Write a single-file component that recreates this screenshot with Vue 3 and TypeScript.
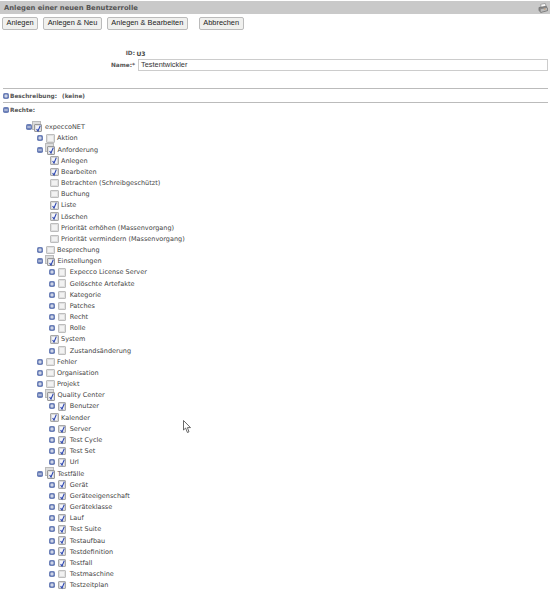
<script setup lang="ts">
interface Row { label: string; level: number; exp: '' | 'plus' | 'minus'; state: 'on' | 'off' | 'tri' }
const spec: [string, number, '' | 'plus' | 'minus', 'on' | 'off' | 'tri'][] = [
  ['expeccoNET', 0, 'minus', 'tri'],
  ['Aktion', 1, 'plus', 'off'],
  ['Anforderung', 1, 'minus', 'tri'],
  ['Anlegen', 2, '', 'on'],
  ['Bearbeiten', 2, '', 'on'],
  ['Betrachten (Schreibgeschützt)', 2, '', 'off'],
  ['Buchung', 2, '', 'off'],
  ['Liste', 2, '', 'on'],
  ['Löschen', 2, '', 'on'],
  ['Priorität erhöhen (Massenvorgang)', 2, '', 'off'],
  ['Priorität vermindern (Massenvorgang)', 2, '', 'off'],
  ['Besprechung', 1, 'plus', 'off'],
  ['Einstellungen', 1, 'minus', 'tri'],
  ['Expecco License Server', 2, 'plus', 'off'],
  ['Gelöschte Artefakte', 2, 'plus', 'off'],
  ['Kategorie', 2, 'plus', 'off'],
  ['Patches', 2, 'plus', 'off'],
  ['Recht', 2, 'plus', 'off'],
  ['Rolle', 2, 'plus', 'off'],
  ['System', 2, '', 'on'],
  ['Zustandsänderung', 2, 'plus', 'off'],
  ['Fehler', 1, 'plus', 'off'],
  ['Organisation', 1, 'plus', 'off'],
  ['Projekt', 1, 'plus', 'off'],
  ['Quality Center', 1, 'minus', 'tri'],
  ['Benutzer', 2, 'plus', 'on'],
  ['Kalender', 2, '', 'on'],
  ['Server', 2, 'plus', 'on'],
  ['Test Cycle', 2, 'plus', 'on'],
  ['Test Set', 2, 'plus', 'on'],
  ['Url', 2, 'plus', 'on'],
  ['Testfälle', 1, 'minus', 'tri'],
  ['Gerät', 2, 'plus', 'on'],
  ['Geräteeigenschaft', 2, 'plus', 'on'],
  ['Geräteklasse', 2, 'plus', 'on'],
  ['Lauf', 2, 'plus', 'on'],
  ['Test Suite', 2, 'plus', 'on'],
  ['Testaufbau', 2, 'plus', 'on'],
  ['Testdefinition', 2, 'plus', 'on'],
  ['Testfall', 2, 'plus', 'on'],
  ['Testmaschine', 2, 'plus', 'off'],
  ['Testzeitplan', 2, 'plus', 'on'],
]
const rows: Row[] = spec.map(([label, level, exp, state]) => ({ label, level, exp, state }))
const buttons = ['Anlegen', 'Anlegen & Neu', 'Anlegen & Bearbeiten']
</script>

<template>
  <div class="page">
    <div class="titlebar">
      <span>Anlegen einer neuen Benutzerrolle</span>
      <svg class="printer" width="10" height="10" viewBox="0 0 11 11">
        <path d="M3 1.5 8 0.5 9 4 3.5 5Z" fill="#f8f8f8" stroke="#777" stroke-width=".6" />
        <path d="M1 5 9 3.5 10.5 6V8.5L3 10.5 1 8Z" fill="#888" stroke="#555" stroke-width=".5" />
        <path d="M3 7 10 5.5V8L3 10Z" fill="#bbb" />
        <circle cx="7.5" cy="6.6" r=".7" fill="#c96" />
      </svg>
    </div>
    <div class="actions">
      <button v-for="b in buttons" :key="b" type="button">{{ b }}</button>
      <button type="button" class="cancel">Abbrechen</button>
    </div>
    <div class="form">
      <div class="field id"><span class="lab">ID:</span><span class="val">U3</span></div>
      <div class="field name">
        <span class="lab">Name:*</span>
        <div class="input">Testentwickler</div>
      </div>
    </div>
    <div class="section first">
      <svg class="exp" width="6" height="6" viewBox="0 0 7 7"><rect width="7" height="7" rx="2" fill="#6c80b8" /><path d="M1.5 3.5H5.5M3.5 1.5V5.5" stroke="#fff" /></svg>
      <b>Beschreibung:</b><b class="none">(keine)</b>
    </div>
    <div class="section">
      <svg class="exp" width="6" height="6" viewBox="0 0 7 7"><rect width="7" height="7" rx="2" fill="#6c80b8" /><path d="M1.5 3.5H5.5" stroke="#fff" /></svg>
      <b>Rechte:</b>
    </div>
    <div class="tree">
      <div v-for="r in rows" :key="r.label" class="row" :class="['l' + r.level, r.exp ? 'has-exp' : 'leaf']">
        <svg v-if="r.exp" class="exp" width="6" height="6" viewBox="0 0 7 7">
          <rect width="7" height="7" rx="2" fill="#6c80b8" />
          <path :d="r.exp === 'plus' ? 'M1.5 3.5H5.5M3.5 1.5V5.5' : 'M1.5 3.5H5.5'" stroke="#fff" />
        </svg>
        <span class="box" :class="r.state">
          <svg v-if="r.state !== 'off'" width="9" height="9" viewBox="0 0 9 9"><path d="M2.6 5 4 7 6.3 1.6" fill="none" stroke="#2b45b0" stroke-width="1.1" /></svg>
        </span>
        <span class="txt">{{ r.label }}</span>
      </div>
    </div>
    <svg class="cursor" width="9" height="14" viewBox="0 0 9 14">
      <path d="M.5.5V10L2.6 8 4.4 12.5 6 11.8 4.4 7.6H7.5Z" fill="#fff" stroke="#444" stroke-width=".8" />
    </svg>
  </div>
</template>

<style>
body { margin: 0; background: #fff; }
</style>

<style scoped>
.page {
  position: relative;
  isolation: isolate;
  width: 550px;
  height: 599px;
  overflow: hidden;
  background: #fff;
  font-family: "DejaVu Sans", Verdana, sans-serif;
  font-size: 6.5px;
  color: #444;
}
.titlebar {
  display: flex;
  align-items: center;
  justify-content: space-between;
  height: 13px;
  margin-top: 1px;
  padding: 0 2px 0 4px;
  background: #c9c9c9;
  font-size: 6.8px;
  font-weight: 700;
  color: #555;
}
.printer { margin-top: 1px; }
.actions {
  display: flex;
  margin: 3px 0 0 2px;
  gap: 5px;
}
button {
  height: 12.5px;
  padding: 0 3.5px;
  border: 1px solid #bbb;
  border-radius: 2px;
  background: #f0f0ee;
  font-family: "Liberation Sans", Arial, sans-serif;
  font-size: 7.4px;
  line-height: 10px;
  color: #222;
}
.cancel { margin-left: 6px; }
.form { margin-top: 18px; }
.field { display: flex; align-items: center; }
.lab {
  width: 136.5px;
  padding-right: 1.5px;
  box-sizing: border-box;
  text-align: right;
  font-weight: 700;
  font-size: 5.8px;
  color: #555;
}
.id { height: 11px; }
.id .val { font-size: 6px; color: #444; font-weight: 700; }
.input {
  width: 410px;
  height: 12px;
  box-sizing: border-box;
  margin-left: 1.5px;
  padding-left: 2px;
  border: 1px solid #ccc;
  font-family: "Liberation Sans", Arial, sans-serif;
  font-size: 7.4px;
  line-height: 10px;
  color: #333;
}
.section {
  display: flex;
  align-items: center;
  gap: 1px;
  height: 13px;
  margin: 0 2px 0 3px;
  border-top: 1px solid #bbb;
  font-size: 5.8px;
  color: #555;
}
.section.first { margin-top: 17.5px; }
.none { margin-left: 4px; }
.exp { flex: none; }
.tree { margin-top: 5.6px; }
.row {
  display: flex;
  align-items: center;
  height: 11.18px;
  white-space: nowrap;
}
.row.l0 { padding-left: 25.5px; }
.row.l1 { padding-left: 37px; }
.row.l2.has-exp { padding-left: 49px; }
.row.l2.leaf { padding-left: 50px; }
.box {
  position: relative;
  display: flex;
  flex: none;
  align-items: center;
  justify-content: center;
  box-sizing: border-box;
  width: 8.5px;
  height: 8.5px;
  border: 1px solid #bdbdbd;
  border-radius: 1px;
  background: #f2f2f2;
  box-shadow: inset 0 0 0 1px #e0e0e0;
}
.box svg { position: absolute; left: -1px; top: -1px; }
.box.on { border-color: #a8a8a8; background: #f4f5fa; box-shadow: inset 0 0 0 1px #d8d8d8; }
.box.tri { background: #f4f4f8; border-color: #999; margin-top: 2px; width: 8px; }
.box.tri::before {
  content: "";
  position: absolute;
  left: -3px;
  top: -4px;
  width: 7px;
  height: 7px;
  border: 1px solid #bbb;
  background: #ddd;
  z-index: -1;
}
.has-exp .box { margin-left: 3px; }
.row.l2.has-exp .box { margin-left: 2.5px; }
.l0 .box.tri { margin-left: 2.5px; }
.l1 .box.tri { margin-left: 4px; }
.txt { margin-left: 2.5px; }
.row.l0 .txt { margin-left: 3px; }
.row.l2.has-exp .txt { margin-left: 3.7px; }
.cursor { position: absolute; left: 183px; top: 420px; }
</style>
